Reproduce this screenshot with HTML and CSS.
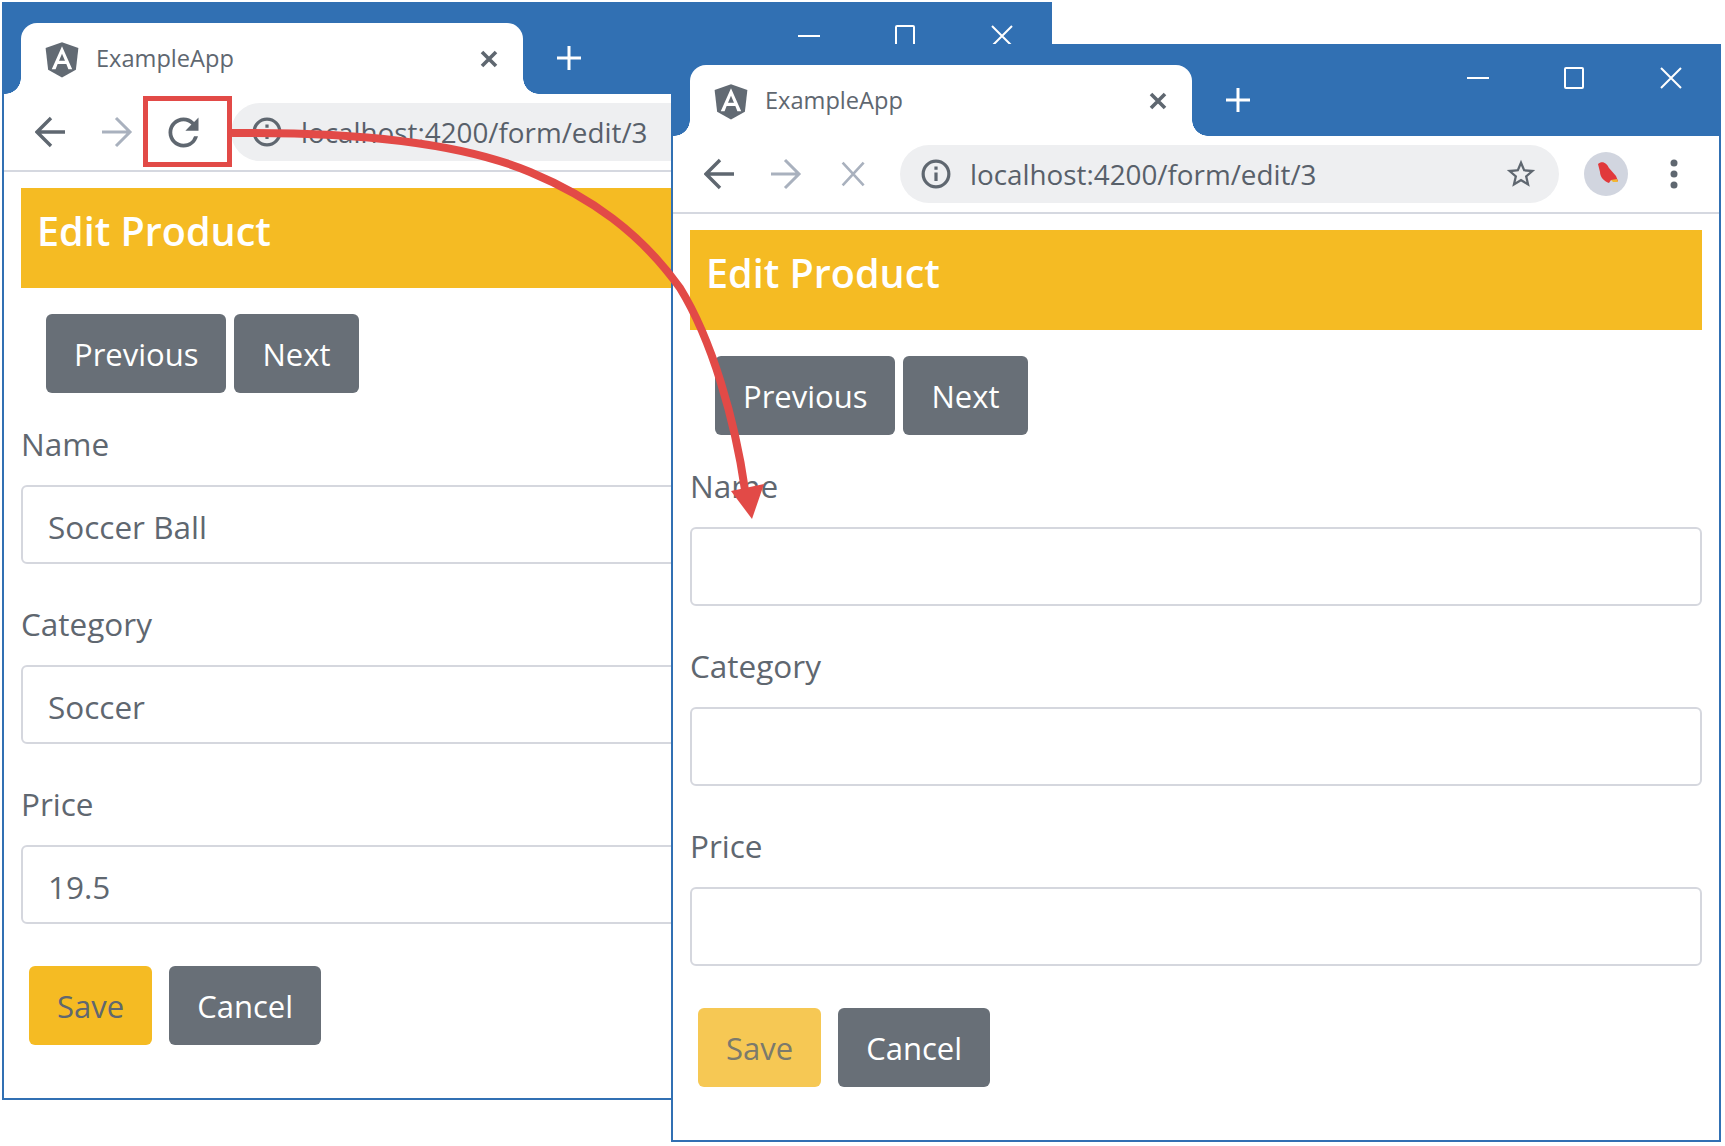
FILE: index.html
```html
<!DOCTYPE html>
<html lang="en">
<head>
    <meta charset="UTF-8">
    <meta name="viewport" content="width=device-width, initial-scale=1.0">
    <title>ExampleApp</title>
    <link rel="stylesheet" href="styles.css">
</head>
<body>
<div class="desk">

    <!-- first window: before the reload -->
    <div class="window window-back">
        <div class="tabstrip">
            <div class="tab">
                <svg class="tab-logo" viewBox="0 0 250 250"><polygon fill="#626a73" points="125,30 31.9,63.2 46.1,186.3 125,230 203.9,186.3 218.1,63.2"/><path fill="#fff" fill-rule="evenodd" d="M125 52.1L66.8 182.6h21.7l11.7-29.2h49.4l11.7 29.2h21.7L125 52.1zM142 135.4H108l17-40.9L142 135.4z"/></svg>
                <span class="tab-title">ExampleApp</span>
                <svg class="tab-close" viewBox="0 0 20 20"><path d="M3 3l14 14M17 3L3 17"/></svg>
            </div>
            <svg class="new-tab" viewBox="0 0 28 28"><path d="M14 2v24M2 14h24"/></svg>
            <div class="controls">
                <div class="control"><svg viewBox="0 0 22 22"><path d="M0 11h22"/></svg></div>
                <div class="control"><svg viewBox="0 0 22 22"><rect x="2" y="1" width="18" height="20" rx="1"/></svg></div>
                <div class="control"><svg viewBox="0 0 22 22"><path d="M1 1l20 20M21 1L1 21"/></svg></div>
            </div>
        </div>
        <div class="toolbar">
            <div class="nav"><svg class="ico" viewBox="0 0 32 32"><path d="M30 16H3M16 2L2 16l14 14"/></svg></div>
            <div class="nav"><svg class="ico ico-off" viewBox="0 0 32 32"><path d="M0 16h27M14 2l14 14-14 14"/></svg></div>
            <div class="nav"><svg class="reload" viewBox="0 0 24 24"><path d="M17.65 6.35A7.958 7.958 0 0 0 12 4c-4.42 0-8 3.58-8 8s3.58 8 8 8c3.73 0 6.84-2.55 7.73-6h-2.08A5.99 5.99 0 0 1 12 18c-3.31 0-6-2.69-6-6s2.69-6 6-6c1.66 0 3.14.69 4.22 1.78L13 11h7V4l-2.35 2.35z"/></svg></div>
            <div class="omnibox">
                <svg class="info" viewBox="0 0 28 28"><circle cx="14" cy="14" r="12"/><path d="M14 12.5v8M14 7v3"/></svg>
                <span class="url">localhost:4200/form/edit/3</span>
                <svg class="star" viewBox="0 0 24 24"><path d="M22 9.24l-7.19-.62L12 2 9.19 8.63 2 9.24l5.46 4.73L5.82 21 12 17.27 18.18 21l-1.63-7.03L22 9.24zM12 15.4l-3.76 2.27 1-4.28-3.32-2.88 4.38-.38L12 6.1l1.71 4.04 4.38.38-3.32 2.88 1 4.28L12 15.4z"/></svg>
            </div>
            <svg class="avatar" viewBox="0 0 44 44"><circle cx="22" cy="22" r="22" fill="#d1d5df"/><path fill="#e1393b" d="M14 12c4-4 9-1 11 4l7 8 2 5-7-1-2 3c-5-2-9-6-9-11z"/><path fill="#f2b632" d="M27 28l6-1 1 3-5 0z"/></svg>
            <svg class="menu" viewBox="0 0 8 30"><circle cx="4" cy="4" r="3.5"/><circle cx="4" cy="15" r="3.5"/><circle cx="4" cy="26" r="3.5"/></svg>
        </div>
        <div class="content">
            <div class="banner">Edit Product</div>
            <div class="pager">
                <button class="btn btn-gray">Previous</button>
                <button class="btn btn-gray">Next</button>
            </div>
            <div class="field">
                <label>Name</label>
                <input type="text" value="Soccer Ball">
            </div>
            <div class="field">
                <label>Category</label>
                <input type="text" value="Soccer">
            </div>
            <div class="field">
                <label>Price</label>
                <input type="text" value="19.5">
            </div>
            <div class="actions">
                <button class="btn btn-yellow">Save</button>
                <button class="btn btn-gray">Cancel</button>
            </div>
        </div>
    </div>

    <!-- second window: after the reload, form is empty -->
    <div class="window window-front">
        <div class="tabstrip">
            <div class="tab">
                <svg class="tab-logo" viewBox="0 0 250 250"><polygon fill="#626a73" points="125,30 31.9,63.2 46.1,186.3 125,230 203.9,186.3 218.1,63.2"/><path fill="#fff" fill-rule="evenodd" d="M125 52.1L66.8 182.6h21.7l11.7-29.2h49.4l11.7 29.2h21.7L125 52.1zM142 135.4H108l17-40.9L142 135.4z"/></svg>
                <span class="tab-title">ExampleApp</span>
                <svg class="tab-close" viewBox="0 0 20 20"><path d="M3 3l14 14M17 3L3 17"/></svg>
            </div>
            <svg class="new-tab" viewBox="0 0 28 28"><path d="M14 2v24M2 14h24"/></svg>
            <div class="controls">
                <div class="control"><svg viewBox="0 0 22 22"><path d="M0 11h22"/></svg></div>
                <div class="control"><svg viewBox="0 0 22 22"><rect x="2" y="1" width="18" height="20" rx="1"/></svg></div>
                <div class="control"><svg viewBox="0 0 22 22"><path d="M1 1l20 20M21 1L1 21"/></svg></div>
            </div>
        </div>
        <div class="toolbar">
            <div class="nav"><svg class="ico" viewBox="0 0 32 32"><path d="M30 16H3M16 2L2 16l14 14"/></svg></div>
            <div class="nav"><svg class="ico ico-off" viewBox="0 0 32 32"><path d="M0 16h27M14 2l14 14-14 14"/></svg></div>
            <div class="nav"><svg class="ico ico-off ico-stop" viewBox="0 0 32 32"><path d="M3 3l24 26M27 3L3 29"/></svg></div>
            <div class="omnibox">
                <svg class="info" viewBox="0 0 28 28"><circle cx="14" cy="14" r="12"/><path d="M14 12.5v8M14 7v3"/></svg>
                <span class="url">localhost:4200/form/edit/3</span>
                <svg class="star" viewBox="0 0 24 24"><path d="M22 9.24l-7.19-.62L12 2 9.19 8.63 2 9.24l5.46 4.73L5.82 21 12 17.27 18.18 21l-1.63-7.03L22 9.24zM12 15.4l-3.76 2.27 1-4.28-3.32-2.88 4.38-.38L12 6.1l1.71 4.04 4.38.38-3.32 2.88 1 4.28L12 15.4z"/></svg>
            </div>
            <svg class="avatar" viewBox="0 0 44 44"><circle cx="22" cy="22" r="22" fill="#d1d5df"/><path fill="#e1393b" d="M14 12c4-4 9-1 11 4l7 8 2 5-7-1-2 3c-5-2-9-6-9-11z"/><path fill="#f2b632" d="M27 28l6-1 1 3-5 0z"/></svg>
            <svg class="menu" viewBox="0 0 8 30"><circle cx="4" cy="4" r="3.5"/><circle cx="4" cy="15" r="3.5"/><circle cx="4" cy="26" r="3.5"/></svg>
        </div>
        <div class="content">
            <div class="banner">Edit Product</div>
            <div class="pager">
                <button class="btn btn-gray">Previous</button>
                <button class="btn btn-gray">Next</button>
            </div>
            <div class="field">
                <label>Name</label>
                <input type="text">
            </div>
            <div class="field">
                <label>Category</label>
                <input type="text">
            </div>
            <div class="field">
                <label>Price</label>
                <input type="text">
            </div>
            <div class="actions">
                <button class="btn btn-yellow" disabled>Save</button>
                <button class="btn btn-gray">Cancel</button>
            </div>
        </div>
    </div>

    <!-- callout drawn over both windows -->
    <svg class="callout" viewBox="0 0 1725 1146">
        <rect class="callout-box" x="145.5" y="98.5" width="84" height="66"/>
        <path class="callout-line" d="M232 133C330 132 450 138 530 172C590 197 640 232 680 288C712 340 735 420 745 490"/>
        <polygon class="callout-head" points="731,491 764,484 752,519"/>
    </svg>
</div>
</body>
</html>
```

FILE: styles.css
```css
html, body {
    margin: 0;
    padding: 0;
    background-color: #fff;
    overflow: hidden;
}

body {
    font-family: "Open Sans", "Noto Sans", sans-serif;
    color: #5f6770;
}

.desk {
    position: relative;
    width: 1725px;
    height: 1146px;
}

.window {
    position: absolute;
    box-sizing: border-box;
    width: 1050px;
    height: 1098px;
    background-color: #fff;
    border: 2px solid #3170b3;
    border-top: none;
    overflow: hidden;
}

.window-back {
    left: 2px;
    top: 2px;
}

.window-front {
    left: 671px;
    top: 44px;
}

/* title bar */
.tabstrip {
    display: flex;
    align-items: flex-end;
    box-sizing: border-box;
    height: 92px;
    padding-left: 17px;
    background-color: #3170b3;
}

.tab {
    position: relative;
    display: flex;
    align-items: center;
    box-sizing: border-box;
    width: 502px;
    height: 71px;
    padding: 0 24px 0 23px;
    background-color: #fff;
    border-radius: 16px 16px 0 0;
}

.tab::before, .tab::after {
    content: "";
    position: absolute;
    bottom: 0;
    width: 16px;
    height: 16px;
}

.tab::before {
    left: -16px;
    background: radial-gradient(circle at 0 0, transparent 15.5px, #fff 16px);
}

.tab::after {
    right: -16px;
    background: radial-gradient(circle at 100% 0, transparent 15.5px, #fff 16px);
}

.tab-logo {
    width: 44px;
    height: 44px;
    margin-left: -4px;
}

.tab-title {
    margin: -2px 0 0 12px;
    font-size: 23.6px;
    color: #5f6770;
}

.tab-close {
    width: 20px;
    height: 20px;
    margin-left: auto;
    fill: none;
    stroke: #5f6770;
    stroke-width: 3.6;
}

.new-tab {
    width: 28px;
    height: 28px;
    margin: 0 0 22px 32px;
    fill: none;
    stroke: #fff;
    stroke-width: 3;
}

.controls {
    display: flex;
    align-self: flex-start;
    margin-left: auto;
    padding-top: 23px;
}

.control {
    display: flex;
    justify-content: center;
    width: 96.5px;
}

.control svg {
    width: 22px;
    height: 22px;
    fill: none;
    stroke: #fff;
    stroke-width: 2;
}

/* toolbar */
.toolbar {
    display: flex;
    align-items: center;
    box-sizing: border-box;
    height: 78px;
    padding-left: 13px;
    border-bottom: 2px solid #d5d8e0;
    flex-wrap: nowrap;
}

.nav {
    display: flex;
    justify-content: center;
    align-items: center;
    flex: none;
    width: 67px;
    height: 50px;
}

.ico {
    width: 32px;
    height: 32px;
    fill: none;
    stroke: #5f6770;
    stroke-width: 3.4;
}

.ico-off {
    stroke: #a9b1be;
    stroke-width: 3;
}

.ico-stop {
    width: 28px;
    height: 28px;
}

.reload {
    width: 45px;
    height: 45px;
    margin-left: -2px;
    fill: #5f6770;
}

.omnibox {
    display: flex;
    align-items: center;
    flex: none;
    box-sizing: border-box;
    width: 659px;
    height: 58px;
    margin-left: 13px;
    padding: 0 21px 0 21px;
    background-color: #eeeff1;
    border-radius: 29px;
}

.info {
    width: 30px;
    height: 30px;
    fill: none;
    stroke: #5f6770;
    stroke-width: 3;
}

.url {
    margin-left: 19px;
    font-size: 27.8px;
    color: #58606a;
    white-space: nowrap;
}

.star {
    width: 34px;
    height: 34px;
    margin-left: auto;
    fill: #5f6770;
}

.avatar {
    flex: none;
    width: 44px;
    height: 44px;
    margin-left: 25px;
}

.menu {
    flex: none;
    width: 8px;
    height: 30px;
    margin-left: 42px;
    fill: #5f6770;
}

/* page */
.content {
    padding: 16px 17px 0 17px;
}

.banner {
    box-sizing: border-box;
    height: 100px;
    padding-left: 16px;
    line-height: 86px;
    font-size: 39.5px;
    font-weight: 600;
    color: #fff;
    background-color: #f5bb23;
}

.pager {
    display: flex;
    gap: 8px;
    margin: 26px 0 31px 25px;
}

.btn {
    box-sizing: border-box;
    height: 79px;
    padding: 0 28px;
    font-family: inherit;
    font-size: 31px;
    border: none;
    border-radius: 6px;
}

.btn-gray {
    color: #fff;
    background-color: #686f77;
}

.btn-yellow {
    color: #5f6770;
    background-color: #f5bb23;
}

.btn-yellow:disabled {
    color: #7b7a6c;
    background-color: #f6c854;
}

.field {
    margin-bottom: 40px;
}

.field label {
    display: block;
    height: 40px;
    margin-bottom: 21px;
    line-height: 40px;
    font-size: 31.5px;
}

.field input {
    display: block;
    box-sizing: border-box;
    width: 100%;
    height: 79px;
    padding: 3px 25px 0;
    font-family: inherit;
    font-size: 31.5px;
    color: #5f6770;
    background-color: #fff;
    border: 2px solid #d5d7de;
    border-radius: 6px;
}

.actions {
    display: flex;
    gap: 17px;
    margin: 42px 0 0 8px;
}

/* callout */
.callout {
    position: absolute;
    left: 0;
    top: 0;
    width: 1725px;
    height: 1146px;
    pointer-events: none;
}

.callout-box {
    fill: none;
    stroke: #e24a47;
    stroke-width: 5;
}

.callout-line {
    fill: none;
    stroke: #e24a47;
    stroke-width: 8;
}

.callout-head {
    fill: #e24a47;
}
```
